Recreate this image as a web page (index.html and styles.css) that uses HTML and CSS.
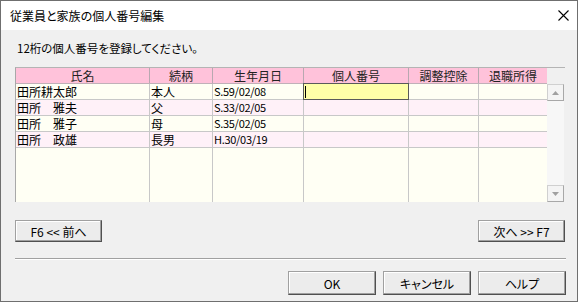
FILE: index.html
```html
<!DOCTYPE html>
<html lang="ja">
<head>
<meta charset="utf-8">
<link rel="stylesheet" href="styles.css">
</head>
<body>
<div class="window">
  <div class="titlebar">
    <span class="title">従業員と家族の個人番号編集</span>
    <svg class="close" width="11" height="11" viewBox="0 0 11 11"><path d="M0.5 0.5 L10.5 10.5 M10.5 0.5 L0.5 10.5" stroke="#000" stroke-width="1.1" fill="none"/></svg>
  </div>
  <div class="content">
    <div class="instruction">12桁の個人番号を登録してください。</div>
    <div class="grid">
      <div class="table">
        <div class="row head">
          <div class="cell">氏名</div>
          <div class="cell">続柄</div>
          <div class="cell">生年月日</div>
          <div class="cell">個人番号</div>
          <div class="cell">調整控除</div>
          <div class="cell">退職所得</div>
        </div>
        <div class="row odd">
          <div class="cell">田所耕太郎</div>
          <div class="cell">本人</div>
          <div class="cell date">S.59/02/08</div>
          <div class="cell selected"><span class="caret"></span></div>
          <div class="cell"></div>
          <div class="cell"></div>
        </div>
        <div class="row even">
          <div class="cell">田所　雅夫</div>
          <div class="cell">父</div>
          <div class="cell date">S.33/02/05</div>
          <div class="cell"></div>
          <div class="cell"></div>
          <div class="cell"></div>
        </div>
        <div class="row odd">
          <div class="cell">田所　雅子</div>
          <div class="cell">母</div>
          <div class="cell date">S.35/02/05</div>
          <div class="cell"></div>
          <div class="cell"></div>
          <div class="cell"></div>
        </div>
        <div class="row even">
          <div class="cell">田所　政雄</div>
          <div class="cell">長男</div>
          <div class="cell date">H.30/03/19</div>
          <div class="cell"></div>
          <div class="cell"></div>
          <div class="cell"></div>
        </div>
        <div class="row filler">
          <div class="cell"></div>
          <div class="cell"></div>
          <div class="cell"></div>
          <div class="cell"></div>
          <div class="cell"></div>
          <div class="cell"></div>
        </div>
      </div>
      <div class="scrollbar">
        <div class="sb-head"></div>
        <div class="sb-btn"><svg width="7" height="4" viewBox="0 0 7 4"><path d="M3.5 0 L7 4 L0 4 Z" fill="#a0a0a0"/></svg></div>
        <div class="sb-track"></div>
        <div class="sb-btn"><svg width="7" height="4" viewBox="0 0 7 4"><path d="M0 0 L7 0 L3.5 4 Z" fill="#a0a0a0"/></svg></div>
      </div>
    </div>
    <div class="nav">
      <button class="btn nav-btn">F6 &lt;&lt; 前へ</button>
      <button class="btn nav-btn">次へ &gt;&gt; F7</button>
    </div>
    <div class="separator"></div>
    <div class="actions">
      <button class="btn act-btn">OK</button>
      <button class="btn act-btn">キャンセル</button>
      <button class="btn act-btn">ヘルプ</button>
    </div>
  </div>
</div>
</body>
</html>
```

FILE: styles.css
```css
* { box-sizing: border-box; }
html, body { margin: 0; padding: 0; background: #ffffff; }
body {
  font-family: "Noto Sans CJK JP", "Liberation Sans", sans-serif;
  font-size: 12px;
  font-feature-settings: "palt";
  color: #000;
}
.window {
  width: 578px;
  height: 302px;
  border: 1px solid #6f6f6f;
  background: #f0f0f0;
  display: flex;
  flex-direction: column;
}
.titlebar {
  height: 29px;
  background: #ffffff;
  display: flex;
  align-items: center;
  justify-content: space-between;
  padding: 0 8px 0 9px;
  flex: none;
}
.title { font-size: 12px; line-height: 16px; }
.close { display: block; }
.content {
  flex: 1;
  padding: 0 12px 0 14px;
  display: flex;
  flex-direction: column;
}
.instruction {
  margin-top: 10px;
  height: 16px;
  line-height: 16px;
  padding-left: 2px;
  font-size: 11.5px;
}
.grid {
  margin-top: 11px;
  height: 135px;
  width: 550px;
  display: flex;
  border-top: 1px solid #b4b4b4;
  border-left: 1px solid #a8a8a8;
}
.table {
  width: 531px;
  display: flex;
  flex-direction: column;
  background: #fffff4;
}
.row {
  display: grid;
  grid-template-columns: 134px 63px 91px 105px 70px 68px;
  height: 16px;
  border-bottom: 1px solid #c8c8c8;
}
.row .cell {
  border-right: 1px solid #c8c8c8;
  line-height: 15px;
  white-space: nowrap;
  overflow: hidden;
  padding-left: 1px;
}
.row .cell:last-child { border-right: none; }
.head { background: #ffc2da; border-bottom: 1px solid #c0b0b8; }
.head .cell {
  text-align: center;
  color: #222;
  border-right: 1px solid #b8a8b0;
  padding-left: 0;
}
.odd { background: #fffff4; }
.even { background: #fff1f8; }
.filler { flex: 1; border-bottom: none; background: #fffff4; }
.date { font-size: 11px; letter-spacing: -0.3px; padding-left: 2px; }
.row .selected {
  background: #ffffa8;
  border: 1px solid #5a5a5a;
  margin: -1px 0 0 -1px;
  height: 17px;
  position: relative;
}
.caret {
  position: absolute;
  left: 1px;
  top: 2px;
  width: 1px;
  height: 12px;
  background: #000;
}
.scrollbar {
  width: 17px;
  display: flex;
  flex-direction: column;
  background: #f0f0f0;
}
.sb-head { height: 16px; background: #f0f0f0; }
.sb-btn {
  height: 17px;
  background: #f4f4f4;
  border: 1px solid #d0d0d0;
  border-right-color: #a8a8a8;
  border-bottom-color: #a8a8a8;
  display: flex;
  align-items: center;
  justify-content: center;
}
.sb-track { flex: 1; background: #f7f7f7; }
.btn {
  font-family: inherit;
  font-size: 12px;
  font-feature-settings: "palt";
  color: #000;
  background: #ececec;
  border: 1px solid #a0a0a0;
  border-right-color: #505050;
  border-bottom-color: #505050;
  box-shadow: inset -1px -1px 0 #a0a0a0, inset 1px 1px 0 #ffffff;
  padding: 0;
  margin: 0;
}
.nav {
  margin-top: 18px;
  display: flex;
  justify-content: space-between;
  width: 550px;
}
.nav-btn { width: 87px; height: 22px; }
.separator {
  margin-top: 16px;
  width: 551px;
  height: 2px;
  border-top: 1px solid #a0a0a0;
  border-bottom: 1px solid #ffffff;
}
.actions {
  margin-top: 11px;
  display: flex;
  justify-content: flex-end;
  gap: 7px;
  width: 551px;
}
.act-btn { width: 88px; height: 24px; }
```
